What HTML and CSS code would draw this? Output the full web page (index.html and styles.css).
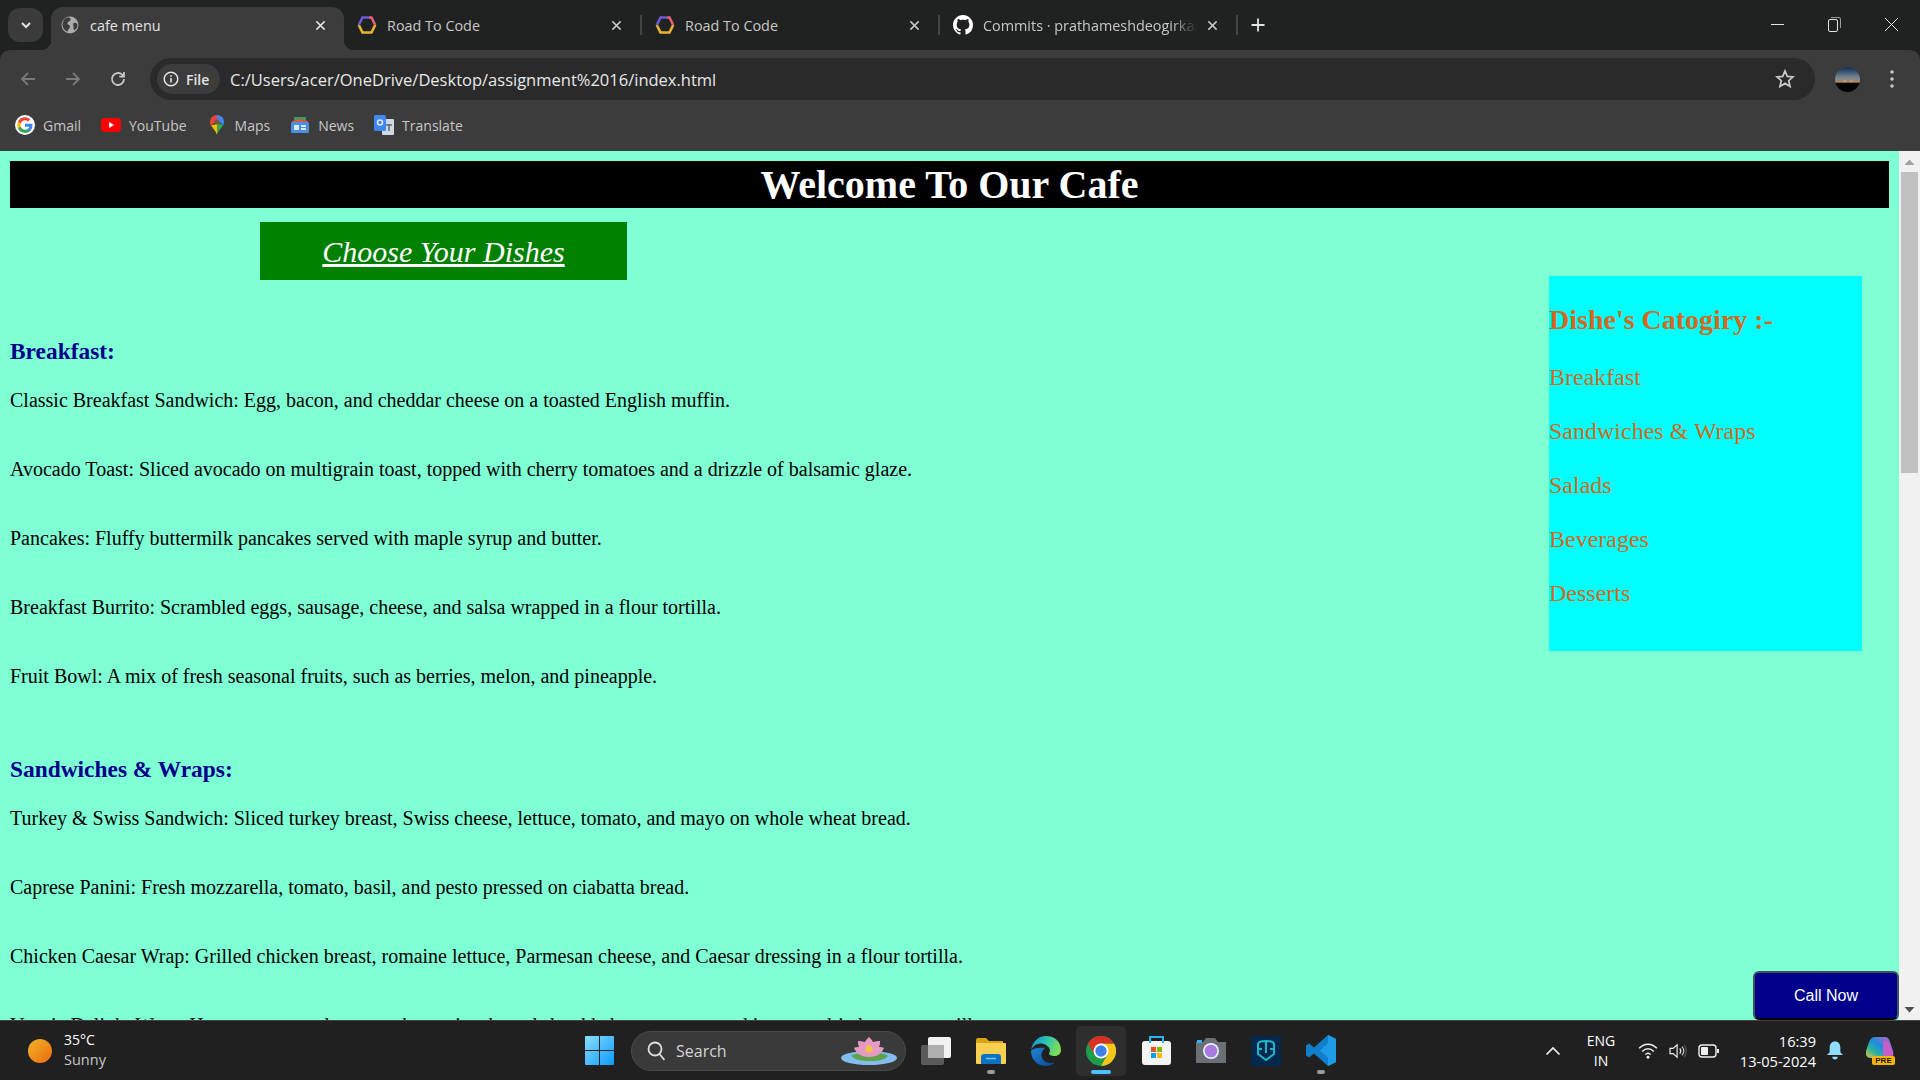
FILE: index.html
```html
<!DOCTYPE html>
<html lang="en">
<head>
<meta charset="utf-8">
<title>cafe menu</title>
<link rel="stylesheet" href="styles.css">
</head>
<body>
<div class="window">
  <header class="tabstrip">
    <div class="tabsearch"><svg width="14" height="14" viewBox="0 0 14 14"><path d="M3 5l4 4 4-4" fill="none" stroke="#e3e3e3" stroke-width="2"/></svg></div>
    <div class="tab active">
      <svg class="fav" width="20" height="18" viewBox="0 0 18 18"><circle cx="9" cy="9" r="8.500" fill="#a9abad"/><path d="M5 2c3-1 5 0 4.500 2S7 5 6.500 7 9 8.500 9 10.500 7 13 6.500 15.500C4 15 1.500 12 1.500 9S3 3 5 2zM13 7c2-.5 3.500.5 3.500 2.500S14.500 14 13.500 14s-1-2-1-3.500S11.500 7.500 13 7z" fill="#3c3c3c"/></svg>
      <span class="tabtitle">cafe menu</span>
      <svg class="tabx" width="11" height="11" viewBox="0 0 12 12"><path d="M1.500 1.500l9 9m0-9l-9 9" stroke="#e3e3e3" stroke-width="1.600"/></svg>
    </div>
    <div class="tab">
      <svg class="fav" width="20" height="18" viewBox="0 0 20 18"><path d="M1.800 9L5.500 16.500h9L18.200 9" fill="none" stroke="#e9b52c" stroke-width="2.600"/><path d="M1.800 9L5.500 1.500H12" fill="none" stroke="#6a5bd0" stroke-width="2.600"/><path d="M12 1.500h2.500L18.200 9" fill="none" stroke="#e2607a" stroke-width="2.600"/></svg>
      <span class="tabtitle">Road To Code</span>
      <svg class="tabx" width="11" height="11" viewBox="0 0 12 12"><path d="M1.500 1.500l9 9m0-9l-9 9" stroke="#c7c7c7" stroke-width="1.600"/></svg>
    </div>
    <i class="tabsep"></i>
    <div class="tab">
      <svg class="fav" width="20" height="18" viewBox="0 0 20 18"><path d="M1.800 9L5.500 16.500h9L18.200 9" fill="none" stroke="#e9b52c" stroke-width="2.600"/><path d="M1.800 9L5.500 1.500H12" fill="none" stroke="#6a5bd0" stroke-width="2.600"/><path d="M12 1.500h2.500L18.200 9" fill="none" stroke="#e2607a" stroke-width="2.600"/></svg>
      <span class="tabtitle">Road To Code</span>
      <svg class="tabx" width="11" height="11" viewBox="0 0 12 12"><path d="M1.500 1.500l9 9m0-9l-9 9" stroke="#c7c7c7" stroke-width="1.600"/></svg>
    </div>
    <i class="tabsep"></i>
    <div class="tab">
      <svg class="fav" width="20" height="20" viewBox="0 0 16 16"><path fill="#fff" d="M8 0C3.580 0 0 3.580 0 8c0 3.540 2.290 6.530 5.470 7.590.4.070.55-.17.55-.38 0-.19-.01-.82-.01-1.490-2.010.37-2.530-.49-2.690-.94-.09-.23-.48-.94-.82-1.130-.28-.15-.68-.52-.01-.53.630-.01 1.080.58 1.230.82.720 1.210 1.870.87 2.330.66.070-.52.280-.87.510-1.070-1.780-.2-3.640-.89-3.640-3.950 0-.87.310-1.590.820-2.150-.08-.2-.36-1.020.08-2.120 0 0 .67-.21 2.200.82.640-.18 1.320-.27 2-.27s1.360.09 2 .27c1.530-1.040 2.200-.82 2.200-.82.440 1.100.16 1.920.08 2.120.51.560.82 1.270.82 2.150 0 3.070-1.870 3.750-3.650 3.950.29.250.54.730.54 1.480 0 1.070-.01 1.930-.01 2.200 0 .21.150.46.550.38A8.010 8.010 0 0016 8c0-4.420-3.580-8-8-8z"/></svg>
      <span class="tabtitle fade">Commits · prathameshdeogirkar</span>
      <svg class="tabx" width="11" height="11" viewBox="0 0 12 12"><path d="M1.500 1.500l9 9m0-9l-9 9" stroke="#c7c7c7" stroke-width="1.600"/></svg>
    </div>
    <i class="tabsep"></i>
    <svg class="newtab" width="16" height="16" viewBox="0 0 16 16"><path d="M8 1.500v13M1.500 8h13" stroke="#e3e3e3" stroke-width="1.800"/></svg>
    <div class="winctl">
      <svg width="13" height="13" viewBox="0 0 13 13"><path d="M0 6.500h13" stroke="#e3e3e3" stroke-width="1"/></svg>
      <svg width="13" height="16" viewBox="0 0 13 16"><rect x=".5" y="3.500" width="9" height="12" rx="1.500" fill="none" stroke="#e3e3e3"/><path d="M3 1.500h8a1.500 1.500 0 011.500 1.500v9" fill="none" stroke="#9a9a9a"/></svg>
      <svg width="13" height="13" viewBox="0 0 13 13"><path d="M0 0l13 13m0-13L0 13" stroke="#e3e3e3" stroke-width="1"/></svg>
    </div>
  </header>

  <div class="toolbar">
    <svg class="navbtn" width="18" height="18" viewBox="0 0 18 18"><path d="M16 9H3m6-6L3 9l6 6" fill="none" stroke="#797979" stroke-width="1.800"/></svg>
    <svg class="navbtn" width="18" height="18" viewBox="0 0 18 18"><path d="M2 9h13M9 3l6 6-6 6" fill="none" stroke="#797979" stroke-width="1.800"/></svg>
    <svg class="navbtn" width="18" height="18" viewBox="0 0 18 18"><path d="M15 9a6 6 0 11-1.800-4.300L15 6.500M15 2v4.700h-4.700" fill="none" stroke="#c7c7c7" stroke-width="1.800"/></svg>
    <div class="omnibox">
      <div class="chip">
        <svg width="16" height="16" viewBox="0 0 16 16"><circle cx="8" cy="8" r="6.800" fill="none" stroke="#e3e3e3" stroke-width="1.500"/><path d="M8 7v4.500M8 4.200v1.600" stroke="#e3e3e3" stroke-width="1.600"/></svg>
        <span>File</span>
      </div>
      <span class="url">C:/Users/acer/OneDrive/Desktop/assignment%2016/index.html</span>
      <svg width="20" height="20" viewBox="0 0 20 20"><path d="M10 2l2.300 5.400 5.700.5-4.300 3.800 1.300 5.700L10 14.400l-5 3 1.300-5.700L2 7.900l5.700-.5z" fill="none" stroke="#c7c7c7" stroke-width="1.800"/></svg>
    </div>
    <svg class="avatar" width="25" height="25" viewBox="0 0 25 25"><defs><linearGradient id="sky" x1="0" y1="0" x2="0" y2="1"><stop offset="0" stop-color="#0f2c4d"/><stop offset=".4" stop-color="#6f8296"/><stop offset=".6" stop-color="#b08a64"/><stop offset=".66" stop-color="#050505"/><stop offset="1" stop-color="#000"/></linearGradient></defs><circle cx="12.500" cy="12.500" r="12.500" fill="url(#sky)"/><path d="M8 15l2-3 1 3h4l1-2 2 2z" fill="#d9a06a"/></svg>
    <svg class="kebab" width="6" height="20" viewBox="0 0 6 20"><circle cx="3" cy="3" r="1.800" fill="#c7c7c7"/><circle cx="3" cy="10" r="1.800" fill="#c7c7c7"/><circle cx="3" cy="17" r="1.800" fill="#c7c7c7"/></svg>
  </div>

  <nav class="bookmarks">
    <a class="bm"><svg width="20" height="20" viewBox="0 0 24 24"><circle cx="12" cy="12" r="12" fill="#fff"/><path fill="#4285f4" d="M21 12.300c0-.7-.1-1.300-.2-1.900H12v3.600h5a4.300 4.300 0 01-1.900 2.800v2.400h3.100c1.800-1.700 2.800-4.100 2.800-6.900z"/><path fill="#34a853" d="M12 21.500c2.600 0 4.700-.8 6.200-2.300l-3.100-2.400c-.8.600-1.900.9-3.100.9-2.400 0-4.500-1.600-5.200-3.900H3.600v2.500a9.500 9.500 0 008.400 5.200z"/><path fill="#fbbc05" d="M6.800 13.800a5.700 5.700 0 010-3.600V7.700H3.600a9.500 9.500 0 000 8.600z"/><path fill="#ea4335" d="M12 6.300c1.400 0 2.600.5 3.600 1.400l2.700-2.700A9.500 9.500 0 003.600 7.700l3.200 2.500C7.500 7.900 9.600 6.300 12 6.300z"/></svg><span>Gmail</span></a>
    <a class="bm"><svg width="20" height="20" viewBox="0 0 20 20"><rect y="3" width="20" height="14" rx="4" fill="#f00"/><path d="M8 7l5 3-5 3z" fill="#fff"/></svg><span>YouTube</span></a>
    <a class="bm"><svg width="20" height="20" viewBox="0 0 20 20"><path d="M10 0C6 0 3 3 3 7c0 1.500.5 2.700 1.200 3.800L10 5z" fill="#e8453c"/><path d="M4 10.500C6 13.500 9 16 10 20V9z" fill="#fbbc05"/><path d="M10 0c4 0 7 3 7 7 0 1.200-.3 2.300-.9 3.300L10 5z" fill="#4285f4"/><path d="M16.200 10c-2 3.500-5.200 6-6.200 10V8z" fill="#34a853"/><circle cx="10" cy="7" r="2.500" fill="#7a5a3a"/></svg><span>Maps</span></a>
    <a class="bm"><svg width="20" height="20" viewBox="0 0 20 20"><rect x="4" y="2" width="12" height="6" rx="1" fill="#3a9f5a"/><path d="M2 6l8-2 8 2-1 3H3z" fill="#d9534f"/><rect x="1" y="7" width="18" height="11" rx="1.500" fill="#4a90e2"/><rect x="4" y="10" width="5" height="5" fill="#dbe9fb"/><rect x="11" y="10" width="5" height="2" fill="#dbe9fb"/><rect x="11" y="13" width="5" height="2" fill="#dbe9fb"/></svg><span>News</span></a>
    <a class="bm"><svg width="20" height="20" viewBox="0 0 20 20"><rect x="8" y="4" width="12" height="16" rx="1" fill="#cfd8e3"/><rect width="12" height="16" rx="1.500" fill="#4285f4"/><circle cx="6" cy="7.500" r="2.500" fill="none" stroke="#dbe9fb" stroke-width="1.500"/><path d="M12 10h6M15 9v7" stroke="#5f6b7a" stroke-width="1.500"/></svg><span>Translate</span></a>
  </nav>

  <div class="viewport">
    <main class="page">
      <h1 class="title">Welcome To Our Cafe</h1>
      <h2 class="choose"><a>Choose Your Dishes</a></h2>
      <aside class="cats">
        <h2>Dishe's Catogiry :-</h2>
        <p>Breakfast</p>
        <p>Sandwiches &amp; Wraps</p>
        <p>Salads</p>
        <p>Beverages</p>
        <p>Desserts</p>
      </aside>
      <section class="menu first">
        <h3>Breakfast:</h3>
        <p>Classic Breakfast Sandwich: Egg, bacon, and cheddar cheese on a toasted English muffin.</p>
        <p>Avocado Toast: Sliced avocado on multigrain toast, topped with cherry tomatoes and a drizzle of balsamic glaze.</p>
        <p>Pancakes: Fluffy buttermilk pancakes served with maple syrup and butter.</p>
        <p>Breakfast Burrito: Scrambled eggs, sausage, cheese, and salsa wrapped in a flour tortilla.</p>
        <p>Fruit Bowl: A mix of fresh seasonal fruits, such as berries, melon, and pineapple.</p>
      </section>
      <section class="menu">
        <h3>Sandwiches &amp; Wraps:</h3>
        <p>Turkey &amp; Swiss Sandwich: Sliced turkey breast, Swiss cheese, lettuce, tomato, and mayo on whole wheat bread.</p>
        <p>Caprese Panini: Fresh mozzarella, tomato, basil, and pesto pressed on ciabatta bread.</p>
        <p>Chicken Caesar Wrap: Grilled chicken breast, romaine lettuce, Parmesan cheese, and Caesar dressing in a flour tortilla.</p>
        <p>Veggie Delight Wrap: Hummus, avocado, cucumber, spinach, and shredded carrots wrapped in a sun-dried tomato tortilla.</p>
      </section>
    </main>
    <div class="scrollbar">
      <svg class="arrow" width="21" height="21" viewBox="0 0 21 21"><path d="M5.500 14l5-5.500 5 5.500z" fill="#a3a3a3"/></svg>
      <div class="track"><div class="thumb"></div></div>
      <svg class="arrow" width="21" height="21" viewBox="0 0 21 21"><path d="M5.500 8l5 5.500 5-5.500z" fill="#505050"/></svg>
    </div>
    <button class="call">Call Now</button>
  </div>

  <footer class="taskbar">
    <div class="weather">
      <svg width="24" height="24" viewBox="0 0 24 24"><defs><linearGradient id="sun" x1="0" y1="0" x2="1" y2="1"><stop offset="0" stop-color="#f0b429"/><stop offset="1" stop-color="#ee6a0c"/></linearGradient></defs><circle cx="12" cy="12" r="12" fill="url(#sun)"/></svg>
      <div class="wtext"><span>35°C</span><span class="dim">Sunny</span></div>
    </div>
    <div class="dock">
      <svg width="29" height="29" viewBox="0 0 29 29"><defs><linearGradient id="win" x1="0" y1="0" x2="1" y2="1"><stop offset="0" stop-color="#8bdcff"/><stop offset="1" stop-color="#0b9bff"/></linearGradient></defs><path d="M1 0h13v14H0V1a1 1 0 011-1zM15 0h13a1 1 0 011 1v13H15zM0 15h14v14H1a1 1 0 01-1-1zM15 15h14v13a1 1 0 01-1 1H15z" fill="url(#win)"/></svg>
      <div class="search">
        <svg width="18" height="20" viewBox="0 0 18 20"><circle cx="8" cy="8" r="6.500" fill="none" stroke="#ddd" stroke-width="1.800"/><path d="M12.500 13l5 6" stroke="#ddd" stroke-width="1.800"/></svg>
        <span>Search</span>
        <svg class="lotus" width="56" height="28" viewBox="0 0 56 28"><ellipse cx="28" cy="21" rx="28" ry="7" fill="#83bdf0"/><path d="M10 19c5-4 30-5 37 0-3 4-9 5-18 5-9 0-15-1-19-5z" fill="#5fa24a"/><path d="M28 0c2 2 3 3 4 5 3-1 5-1 7-1 0 2 0 4-1 6 2 0 4 0 5 1-2 5-7 9-15 9S15 16 13 11c1-1 3-1 5-1-1-2-1-4-1-6 2 0 4 0 7 1 1-2 2-3 4-5z" fill="#e59ac4"/><circle cx="28" cy="12" r="3.500" fill="#f2c53d"/></svg>
      </div>
      <div class="dockitem"><svg width="30" height="28" viewBox="0 0 30 28"><rect y="8" width="23" height="20" rx="2" fill="#5a5a5a"/><rect x="7" width="23" height="21" rx="2" fill="#f2f2f2"/><rect x="7" y="8" width="16" height="13" fill="#b0b0b0"/></svg></div>
      <div class="dockitem run"><svg width="30" height="26" viewBox="0 0 30 26"><path d="M0 2a2 2 0 012-2h8l3 3h14v5H0z" fill="#d9a514"/><rect y="5" width="30" height="21" rx="1" fill="#f7d052"/><path d="M5 19a3 3 0 013-3h14a3 3 0 013 3v7H5z" fill="#0c71c4"/><path d="M10 20.500h10" stroke="#7cc6f2" stroke-width="1.500"/></svg></div>
      <div class="dockitem"><svg width="30" height="30" viewBox="0 0 30 30"><defs><linearGradient id="edge" x1="0" y1="0" x2="1" y2=".3"><stop offset="0" stop-color="#1687d8"/><stop offset=".55" stop-color="#2cc4b0"/><stop offset="1" stop-color="#7edb5a"/></linearGradient><linearGradient id="edge2" x1="0" y1="0" x2="1" y2="1"><stop offset="0" stop-color="#1a86d6"/><stop offset="1" stop-color="#0c4a92"/></linearGradient></defs><path d="M0 15C0 24 7 30 15 30c3 0 6-1 8-2.500.5-.5 0-1-.5-.8-1 .3-2 .3-3 .3-6 0-9-4-9-8 0-3 1.500-5 3.500-7C7 11 1 13 0 15z" fill="url(#edge2)"/><path d="M0 15C1 6 7 0 15 0c9 0 15 6 15 14 0 4-3 6-7 6-3 0-5-1-5-2.500 0-.8 1-1.200 1-3 0-3-4-7-9-7C4 7.500 .5 12 0 15z" fill="url(#edge)"/></svg></div>
      <div class="dockitem active"><svg width="30" height="30" viewBox="0 0 30 30"><circle cx="15" cy="15" r="15" fill="#1e9e4a"/><path d="M15 7.500H28A15 15 0 0115 30l6.500-11.250z" fill="#f5c518"/><path d="M2 7.500A15 15 0 0128 7.500H15L8.500 18.750z" fill="#d93025"/><circle cx="15" cy="15" r="7.500" fill="#fff"/><circle cx="15" cy="15" r="5.700" fill="#3f7fe8"/></svg><b class="pill"></b></div>
      <div class="dockitem"><svg width="29" height="29" viewBox="0 0 29 29"><rect y="5" width="29" height="24" rx="3" fill="#f4f4f4"/><path d="M8 7V1h13v6" fill="none" stroke="#29b6f6" stroke-width="2"/><rect x="9" y="11" width="5" height="5" fill="#e8532b"/><rect x="15" y="11" width="5" height="5" fill="#7fba00"/><rect x="9" y="17" width="5" height="5" fill="#00a4ef"/><rect x="15" y="17" width="5" height="5" fill="#ffb900"/></svg></div>
      <div class="dockitem"><svg width="30" height="25" viewBox="0 0 30 25"><path d="M0 4h7l3-4h9l3 4h8v21H0z" fill="#6b7076"/><rect x="1" y="2" width="5" height="3" fill="#29b6f6"/><circle cx="15" cy="13" r="8" fill="#e8eef5"/><circle cx="15" cy="13" r="6.300" fill="#a67ae0"/></svg></div>
      <div class="dockitem"><svg width="30" height="30" viewBox="0 0 30 30"><rect width="30" height="30" fill="#04294e"/><path d="M7 8c0-2 4-3 8-3s8 1 8 3v10l-8 6-8-6zM15 5v12M7 13l4 0M23 13l-4 0" fill="none" stroke="#18b7c9" stroke-width="2"/></svg></div>
      <div class="dockitem run"><svg width="30" height="31" viewBox="0 0 30 31"><path d="M22 0l8 4v23l-8 4L8 18.500l-5 4-3-2V10.500l3-2 5 4z" fill="#0f7fcc"/><path d="M22 0l8 4v23l-8 4zM22 8.500l-8.500 7 8.500 7z" fill="#1f9ce8" fill-rule="evenodd"/></svg></div>
    </div>
    <div class="tray">
      <svg width="16" height="10" viewBox="0 0 16 10"><path d="M1.500 8.500L8 2l6.500 6.500" fill="none" stroke="#eee" stroke-width="1.700"/></svg>
      <div class="lang"><span>ENG</span><span>IN</span></div>
      <svg class="wifi" width="20" height="16" viewBox="0 0 22 18"><path d="M1 6c6-6 14-6 20 0M4.500 9.500c4-4 9-4 13 0M8 13c2-2 4-2 6 0" fill="none" stroke="#eee" stroke-width="1.700"/><circle cx="11" cy="16" r="1.600" fill="#eee"/></svg>
      <svg class="sound" width="20" height="16" viewBox="0 0 20 18"><path d="M1 6h3.500L9 2v14l-4.500-4H1z" fill="none" stroke="#eee" stroke-width="1.300"/><path d="M12 6c1.500 2 1.500 4 0 6" fill="none" stroke="#eee" stroke-width="1.300"/><path d="M14.500 4c2.500 3 2.500 7 0 10" fill="none" stroke="#ccc" stroke-width="1.300"/><path d="M17 2c3 4 3 10 0 14" fill="none" stroke="#555" stroke-width="1.300"/></svg>
      <svg class="batt" width="21" height="14" viewBox="0 0 21 14"><rect x="1" y="1" width="17" height="12" rx="3" fill="none" stroke="#eee" stroke-width="1.400"/><rect x="3" y="3" width="7" height="8" rx="1" fill="#eee"/><rect x="19" y="5" width="2" height="4" fill="#eee"/></svg>
      <div class="clock"><span>16:39</span><span>13-05-2024</span></div>
      <svg class="bell" width="16" height="19" viewBox="0 0 18 20"><path d="M9 0c4 0 6 3 6 7v5l3 3H0l3-3V7c0-4 2-7 6-7z" fill="#8fdcff"/><path d="M6 17h6a3 3 0 01-6 0z" fill="#8fdcff"/></svg>
      <div class="copilot">
        <svg width="29" height="24" viewBox="0 0 29 24"><defs><linearGradient id="co" x1="0" y1="1" x2="1" y2="0"><stop offset="0" stop-color="#e8c93c"/><stop offset=".3" stop-color="#2fb39a"/><stop offset=".55" stop-color="#1b8be0"/><stop offset="1" stop-color="#d45fc0"/></linearGradient></defs><path d="M9 0h10c3 0 4 2 5 5l3 9c1 4-1 7-4 7H5c-4 0-6-3-5-7l3-9c1-3 3-5 6-5z" fill="url(#co)"/><path d="M17 4c4-1 6 1 7 4l3 7c1 4-1 6-4 6h-6z" fill="#c85cc8"/></svg>
        <span class="pre">PRE</span>
      </div>
    </div>
  </footer>
</div>
</body>
</html>
```
FILE: styles.css
```css
* { box-sizing: border-box; }
html, body { margin: 0; height: 100%; overflow: hidden; }
svg { display: block; flex: none; }

.window { display: flex; flex-direction: column; width: 1920px; height: 1080px; font-family: "Open Sans", "Noto Sans", sans-serif; background: #202221; }

.tabstrip { display: flex; align-items: flex-start; height: 50px; padding-left: 8px; background: #202221; color: #c7c7c7; font-size: 14.4px; }
.tabsearch { display: flex; align-items: center; justify-content: center; flex: none; width: 35px; height: 34px; margin: 8px 8px 0 0; border-radius: 12px; background: #3b3b3b; }
.tab { display: flex; align-items: center; flex: none; width: 296px; height: 34px; margin-top: 8px; padding: 0 18px 0 13px; }
.tab.active { position: relative; width: 293px; height: 43px; margin-top: 7px; padding: 0 18px 7px 9px; background: #3c3c3c; border-radius: 12px 12px 0 0; color: #e3e3e3; }
.tab.active::before, .tab.active::after { content: ""; position: absolute; bottom: 0; width: 10px; height: 10px; }
.tab.active::before { left: -10px; background: radial-gradient(circle at 0 0, transparent 10px, #3c3c3c 10.5px); }
.tab.active::after { right: -10px; background: radial-gradient(circle at 100% 0, transparent 10px, #3c3c3c 10.5px); }
.tab .fav { margin-right: 10px; }
.tabtitle { flex: 1; min-width: 0; white-space: nowrap; overflow: hidden; }
.tabtitle.fade { -webkit-mask-image: linear-gradient(90deg, #000 88%, transparent); mask-image: linear-gradient(90deg, #000 88%, transparent); }
.tabx { margin-left: 10px; }
.tabsep { flex: none; width: 2px; height: 20px; margin-top: 15px; background: #454545; }
.newtab { margin: 17px 0 0 12px; }
.winctl { display: flex; align-items: center; gap: 44px; margin-left: auto; margin-top: 16px; padding-right: 22px; }

.toolbar { display: flex; align-items: center; height: 58px; padding-left: 19px; background: #3c3c3c; border-radius: 10px 10px 0 0; }
.navbtn { margin-right: 27px; }
.omnibox { display: flex; align-items: center; flex: none; width: 1665px; height: 42px; margin-left: -4px; padding: 0 20px 0 7px; border-radius: 21px; background: #2a2a2a; color: #e8e8e8; font-size: 16.5px; }
.chip { display: flex; align-items: center; gap: 7px; width: 63px; height: 30px; padding-left: 6px; border-radius: 15px; background: #3c3c3c; font-size: 14px; font-weight: 600; color: #e3e3e3; }
.url { flex: 1; margin-left: 10px; white-space: nowrap; }
.avatar { margin-left: 20px; }
.kebab { margin-left: 29px; }

.bookmarks { display: flex; align-items: center; gap: 20px; height: 43px; padding: 0 0 9px 15px; background: #3c3c3c; color: #c7c7c7; font-size: 14px; }
.bm { display: flex; align-items: center; gap: 8px; }

.viewport { position: relative; display: flex; flex: 1; min-height: 0; overflow: hidden; background: #7fffd4; }
.page { flex: 1; min-width: 0; overflow: hidden; padding: 10px 10px 0 10px; font-family: "Liberation Serif", serif; color: #000; }
.title { height: 47px; margin: 0; padding-top: 1px; background: #000; color: #fff; text-align: center; font-size: 40px; line-height: 46px; font-weight: bold; }
.choose { display: flex; align-items: center; justify-content: center; width: 367px; height: 58px; margin: 14px 0 0 250px; padding-top: 2px; background: #008000; font-size: 30px; font-weight: normal; font-style: italic; }
.choose a { color: #fff; text-decoration: underline; }
.cats { float: right; width: 313px; height: 375px; margin: -4px 27px 0 0; background: #00ffff; color: #d2691e; font-size: 24px; }
.cats h2 { margin: 0; padding: 28px 0 1px; font-size: 28px; line-height: 32px; font-weight: bold; }
.cats p { margin: 0; padding-top: 26px; line-height: 28px; }
.menu { padding-top: 68px; }
.menu.first { padding-top: 58px; }
.menu h3 { margin: 0; font-size: 23.4px; line-height: 27px; color: #00008b; font-weight: bold; }
.menu p { margin: 0; padding-top: 46px; font-size: 20px; line-height: 23px; }
.menu h3 + p { padding-top: 24px; }

.scrollbar { display: flex; flex-direction: column; flex: none; width: 21px; background: #f1f1f1; }
.track { flex: 1; padding-left: 2px; }
.thumb { width: 17px; height: 301px; background: #c1c1c1; }
.call { position: absolute; right: 21px; bottom: 0; width: 146px; height: 49px; background: #00008b; color: #fff; border: 2px solid #40525a; border-bottom-color: #000; border-radius: 6px; font-family: "Liberation Sans", sans-serif; font-size: 16px; }

.taskbar { display: flex; align-items: center; height: 60px; background: #202020; border-top: 1px solid #444; color: #fff; font-size: 14px; }
.weather { display: flex; align-items: center; flex: none; gap: 12px; width: 585px; padding-left: 28px; }
.wtext { display: flex; flex-direction: column; padding-bottom: 2px; line-height: 20px; }
.dim { color: #c8c8c8; font-size: 14.5px; }
.dock { display: flex; align-items: center; flex: none; }
.search { display: flex; align-items: center; gap: 11px; width: 275px; height: 40px; margin-left: 17px; padding: 0 8px 0 15px; border-radius: 20px; background: #3a3a3a; border: 1px solid #4b4b4b; color: #d4d4d4; font-size: 16px; }
.search .lotus { margin-left: auto; }
.dockitem { position: relative; display: flex; align-items: center; justify-content: center; width: 50px; height: 50px; margin-left: 5px; }
.dockitem.active { background: #2e2e2e; border-radius: 5px; }
.dockitem.run::after { content: ""; position: absolute; bottom: 2px; left: 21px; width: 8px; height: 4px; border-radius: 2px; background: #9a9a9a; }
.pill { position: absolute; bottom: 2px; left: 15px; width: 20px; height: 4px; border-radius: 2px; background: #4cc2ff; }
.tray { display: flex; align-items: center; margin-left: 199px; }
.lang { display: flex; flex-direction: column; align-items: center; width: 30px; margin-left: 25px; line-height: 20px; }
.wifi { margin-left: 22px; }
.sound, .batt { margin-left: 10px; }
.clock { display: flex; flex-direction: column; align-items: flex-end; width: 97px; font-size: 14.6px; line-height: 20px; white-space: nowrap; }
.bell { margin-left: 11px; }
.copilot { position: relative; width: 29px; height: 28px; margin-left: 23px; }
.pre { position: absolute; right: 0; bottom: 0; width: 23px; height: 9px; border-radius: 2px; background: #f7b500; color: #1a1a1a; font-family: "Liberation Sans", sans-serif; font-size: 8px; font-weight: bold; line-height: 9px; text-align: center; }
```
